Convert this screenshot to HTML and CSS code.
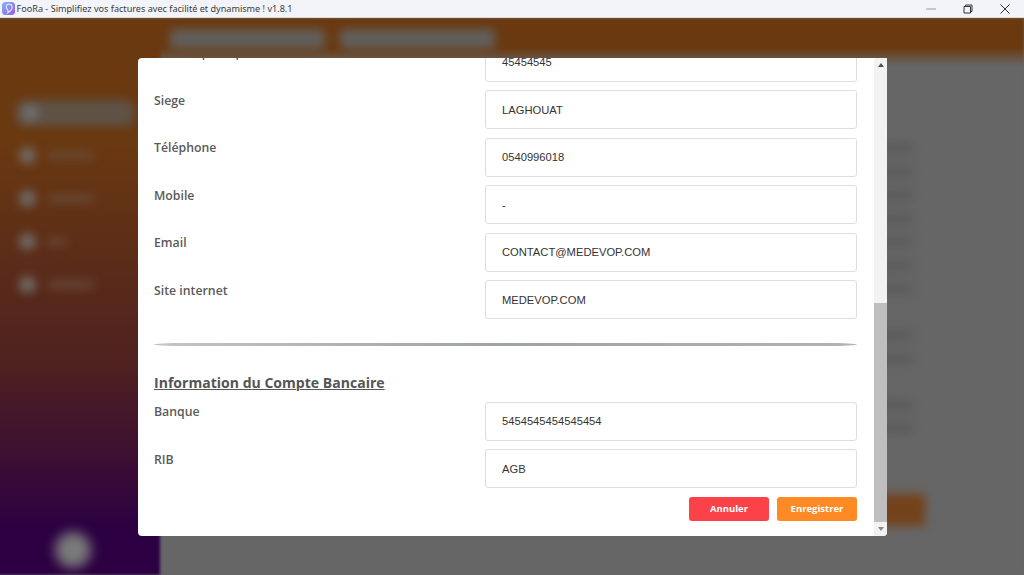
FILE: index.html
```html
<!DOCTYPE html>
<html lang="fr">
<head>
<meta charset="utf-8">
<title>FooRa</title>
<link rel="stylesheet" href="styles.css">
</head>
<body>
<div class="window">
  <header class="titlebar">
    <svg class="app-icon" width="13" height="13" viewBox="0 0 13 13">
      <defs><linearGradient id="ic" x1="0" y1="0" x2="1" y2="1"><stop offset="0" stop-color="#7fb4f2"/><stop offset="1" stop-color="#9a5ce8"/></linearGradient></defs>
      <rect width="13" height="13" rx="3.5" fill="url(#ic)"/>
      <path d="M6.800 2.200c2 0 3.300 1.500 3.300 3.200 0 2.200-2.200 3.900-4.300 5.400.5-1.500.5-2.500-.6-3.700C3.900 5.700 3.900 2.200 6.800 2.200Z" fill="none" stroke="#dfe8fb" stroke-width="1.200"/>
    </svg>
    <span class="title">FooRa - Simplifiez vos factures avec facilité et dynamisme ! v1.8.1</span>
    <div class="controls">
      <svg width="10" height="10" viewBox="0 0 10 10"><path d="M0 5h10" stroke="#9a9a9a" stroke-width="1"/></svg>
      <svg width="10" height="10" viewBox="0 0 10 10"><path d="M2.500 1.800V1h6.500v6.500h-1.300M1 2.500h6.500V9H1Z" fill="none" stroke="#333" stroke-width="1"/></svg>
      <svg width="10" height="10" viewBox="0 0 10 10"><path d="M.5.500l9 9M9.500.500l-9 9" stroke="#333" stroke-width="1"/></svg>
    </div>
  </header>
  <div class="app">
    <aside class="sidebar">
      <div class="blur nav-active"></div>
      <div class="nav-row"><i class="blur dot"></i><i class="blur txt t1"></i></div>
      <div class="nav-row"><i class="blur dot"></i><i class="blur txt t2"></i></div>
      <div class="nav-row"><i class="blur dot"></i><i class="blur txt t3"></i></div>
      <div class="nav-row"><i class="blur dot"></i><i class="blur txt t4"></i></div>
      <div class="blur avatar"></div>
    </aside>
    <main class="content">
      <div class="topbar"><i class="blur pill"></i><i class="blur pill"></i></div>
      <div class="back-rows">
        <div class="row-group">
          <i class="blur row"></i><i class="blur row"></i><i class="blur row"></i><i class="blur row"></i>
          <i class="blur row"></i><i class="blur row"></i><i class="blur row"></i>
        </div>
        <div class="row-group"><i class="blur row"></i><i class="blur row"></i></div>
        <div class="row-group"><i class="blur row"></i><i class="blur row"></i></div>
      </div>
      <div class="blur back-btn"></div>
    </main>
  </div>
  <section class="modal">
    <div class="scroller">
      <div class="field"><label>Activité principale</label><div class="input">45454545</div></div>
      <div class="field"><label>Siege</label><div class="input">LAGHOUAT</div></div>
      <div class="field"><label>Téléphone</label><div class="input">0540996018</div></div>
      <div class="field"><label>Mobile</label><div class="input">-</div></div>
      <div class="field"><label>Email</label><div class="input">CONTACT@MEDEVOP.COM</div></div>
      <div class="field"><label>Site internet</label><div class="input">MEDEVOP.COM</div></div>
      <hr class="divider">
      <h2 class="section-title">Information du Compte Bancaire</h2>
      <div class="field"><label>Banque</label><div class="input">5454545454545454</div></div>
      <div class="field"><label>RIB</label><div class="input">AGB</div></div>
      <div class="actions">
        <button class="btn cancel">Annuler</button>
        <button class="btn save">Enregistrer</button>
      </div>
    </div>
    <div class="scrollbar">
      <svg width="6" height="4" viewBox="0 0 6 4"><path d="M3 0l3 4H0Z" fill="#505050"/></svg>
      <div class="track"><div class="thumb"></div></div>
      <svg width="6" height="4" viewBox="0 0 6 4"><path d="M3 4L0 0h6Z" fill="#888"/></svg>
    </div>
  </section>
</div>
</body>
</html>
```
FILE: styles.css
```css
* { box-sizing: border-box; }
html, body { margin: 0; height: 100%; overflow: hidden; }
body { font-family: "Open Sans", "Noto Sans", sans-serif; background: #666; }
.window { position: relative; width: 1024px; height: 575px; display: flex; flex-direction: column; overflow: hidden; }
.titlebar { position: relative; z-index: 1; height: 18px; flex: none; background: #f2f4fa; display: flex; align-items: center; padding-left: 1.500px; font-family: "Noto Sans", "Open Sans", sans-serif; font-size: 9.100px; color: #3a3a3a; border-bottom: 1px solid #e6dccb; }
.app-icon { flex: none; margin-right: 2px; }
.title { white-space: nowrap; }
.controls { margin-left: auto; padding-right: 14px; display: flex; gap: 27px; align-items: center; }
.app { flex: 1; display: flex; background: #666; min-height: 0; margin-left: -6px; filter: blur(1.500px); }
.sidebar { position: relative; width: 166px; flex: none; background: linear-gradient(180deg, #6a3910 0%, #6a3910 22%, #4f2120 62%, #2c0042 92%, #2c0042 100%); padding-top: 115.500px; display: flex; flex-direction: column; }
.blur { filter: blur(6px); background: #6a6a6a; display: block; }
.nav-active { position: absolute; left: 22px; top: 82px; width: 118px; height: 26px; border-radius: 8px; background: radial-gradient(circle at 14px 50%, #6e6e6e 0 8px, transparent 9px), #5f5347; filter: blur(5px); }
.nav-row { height: 43px; display: flex; align-items: center; gap: 12px; padding-left: 25px; flex: none; }
.dot { width: 17px; height: 17px; border-radius: 50%; background: #6f6a66; filter: blur(5px); }
.txt { height: 7px; background: #684c3a; filter: blur(5px); }
.t1 { width: 45px; } .t2 { width: 46px; } .t3 { width: 18px; } .t4 { width: 46px; }
.avatar { position: absolute; left: 61px; top: 514px; width: 36px; height: 36px; border-radius: 50%; background: #7a7a7a; }
.content { flex: 1; display: flex; flex-direction: column; position: relative; min-width: 0; background: #666; }
.topbar { height: 48px; flex: none; background: linear-gradient(180deg, #6a3910 0%, #6a3910 62%, #666 100%); display: flex; align-items: flex-start; gap: 15px; padding: 11px 0 0 10px; }
.pill { width: 155px; height: 20px; border-radius: 4px; background: #615f5b; filter: blur(5px); }
.back-rows { display: flex; flex-direction: column; align-items: flex-end; gap: 36px; padding: 77px 112px 0 0; }
.row-group { display: flex; flex-direction: column; gap: 13.500px; }
.row { width: 40px; height: 10px; background: #5a5a5a; filter: blur(5px); }
.back-btn { position: absolute; left: 715px; top: 476px; width: 50px; height: 32px; background: #74421a; filter: blur(5px); }
.modal { position: absolute; left: 138px; top: 58px; width: 749px; height: 478px; background: #fff; border-radius: 4px 0 4px 4px; display: flex; overflow: hidden; }
.scroller { flex: 1; min-width: 0; padding: 0 17px 0 16px; margin-top: -15.500px; color: #555; }
.field { display: grid; grid-template-columns: 331px 372px; height: 47.500px; font-size: 12.300px; }
.field label { line-height: 18px; padding-top: 1.500px; font-weight: 550; color: #5a5a5a; }
.input { height: 39px; border: 1px solid #ddd; border-radius: 3px; padding: 0 16px; display: flex; align-items: center; font-family: "Liberation Sans", Arial, sans-serif; font-size: 11.200px; color: #333; }
.divider { border: 0; height: 3px; margin: 15.500px 0 0; border-radius: 30px / 50%; background: linear-gradient(90deg, #c4c4c4 0%, #9ea3a6 50%, #b0b4b7 100%); }
.section-title { margin: 28px 0 0; height: 27.500px; font-size: 14.050px; line-height: 18px; font-weight: 700; color: #555; text-decoration: underline; }
.actions { display: flex; justify-content: flex-end; gap: 8px; }
.btn { width: 80px; height: 24px; border: 0; border-radius: 3px; color: #fff; font-family: "Open Sans", sans-serif; font-size: 9.500px; font-weight: 700; padding: 0; }
.cancel { background: #fb4248; }
.save { background: #fd8a24; }
.scrollbar { width: 13px; flex: none; background: #f2f2f2; display: flex; flex-direction: column; align-items: center; }
.scrollbar svg { flex: none; margin: 5px 0; }
.track { flex: 1; width: 100%; display: flex; flex-direction: column; justify-content: flex-end; }
.thumb { height: 219px; background: #bfbfbf; }
```
